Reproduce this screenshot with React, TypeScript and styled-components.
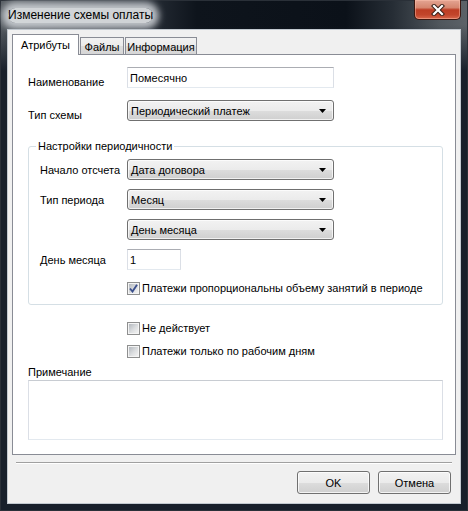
import React from "react";
import styled, { createGlobalStyle } from "styled-components";

const Global = createGlobalStyle`
  html, body { margin: 0; padding: 0; background: #18202b; }
  body { font-family: "Liberation Sans", Arial, sans-serif; font-size: 11px; color: #000; }
  * { box-sizing: border-box; }
`;

const Window = styled.div`
  width: 468px;
  height: 511px;
  border: 1px solid #2a3038;
  display: flex;
  flex-direction: column;
  background:
    linear-gradient(to bottom, rgba(24, 32, 43, 0) 0px, rgba(24, 32, 43, 0) 24px, #18202b 70px),
    linear-gradient(to right, #585e64 0%, #4c5258 3%, #2a313a 30%, #0e141c 42%, #0b1119 74%, #262d35 84%, #4f565c 94%, #5c6268 100%);
`;

const TitleBar = styled.div`
  height: 28px;
  display: flex;
  align-items: flex-start;
  justify-content: space-between;
`;

const Title = styled.div`
  margin: 7px 0 0 7px;
  font-size: 12px;
  line-height: 15px;
  color: #000;
  border-radius: 8px;
  background: rgba(225, 228, 231, 0.9);
  box-shadow: 0 0 7px 6px rgba(215, 219, 223, 0.85);
`;

const CloseButton = styled.div`
  width: 47px;
  height: 20px;
  margin: -1px 6px 0 0;
  border: 1px solid #3c1710;
  border-top: none;
  border-radius: 0 0 5px 5px;
  display: flex;
  align-items: center;
  justify-content: center;
  background: linear-gradient(to bottom, #e4a593 0%, #d5866f 40%, #bd3d24 52%, #c2452b 78%, #d8674c 100%);
  box-shadow: inset 0 0 0 1px rgba(255, 200, 180, 0.45);
`;

const Client = styled.div`
  flex: 1;
  margin: 0 6px 6px;
  border: 1px solid #c2c9d0;
  background: #f0f0f0;
  display: flex;
  flex-direction: column;
`;

const TabStrip = styled.div`
  height: 24px;
  padding-left: 4px;
  display: flex;
  align-items: flex-end;
`;

const Tab = styled.div<{ $active?: boolean; $w: number }>`
  width: ${(p) => p.$w}px;
  height: ${(p) => (p.$active ? 21 : 17)}px;
  margin-bottom: ${(p) => (p.$active ? -1 : 0)}px;
  position: relative;
  z-index: ${(p) => (p.$active ? 1 : 0)};
  border: 1px solid #898c95;
  border-bottom: none;
  margin-left: ${(p) => (p.$active ? 0 : 1)}px;
  display: flex;
  align-items: center;
  justify-content: center;
  padding-top: ${(p) => (p.$active ? 0 : 1)}px;
  background: ${(p) =>
    p.$active ? "#ffffff" : "linear-gradient(to bottom, #f2f2f2 0%, #ebebeb 50%, #dddddd 51%, #d6d6d6 100%)"};
`;

const Panel = styled.div`
  height: 401px;
  margin: 0 4px 0 4px;
  border: 1px solid #898c95;
  background: #fff;
  padding: 11px 12px 0 15px;
  display: flex;
  flex-direction: column;
`;

const Row = styled.div<{ $col: number; $top?: number }>`
  display: grid;
  grid-template-columns: ${(p) => p.$col}px auto;
  align-items: center;
  justify-content: start;
  margin-top: ${(p) => p.$top ?? 0}px;
`;

const Label = styled.span<{ $drop?: number }>`
  line-height: 13px;
  margin-top: ${(p) => p.$drop ?? 0}px;
  white-space: nowrap;
`;

const TextBox = styled.div<{ $w: number }>`
  width: ${(p) => p.$w}px;
  height: 21px;
  border: 1px solid #dbdfe6;
  border-top-color: #abadb3;
  border-bottom-color: #e3e9ef;
  background: #fff;
  padding-left: 2px;
  display: flex;
  align-items: center;
`;

const ComboBox = styled.div`
  width: 207px;
  height: 21px;
  border: 1px solid #707070;
  border-radius: 3px;
  padding: 0 7px 0 3px;
  display: flex;
  align-items: center;
  justify-content: space-between;
  background: linear-gradient(to bottom, #f2f2f2 0%, #ebebeb 50%, #dddddd 51%, #cfcfcf 100%);
  box-shadow: inset 0 0 0 1px rgba(255, 255, 255, 0.7);
`;

const GroupBox = styled.fieldset`
  margin: 18px 0 0 0;
  min-width: 0;
  border: 1px solid #d5dfe5;
  border-radius: 3px;
  padding: 6px 11px 9px 11px;
  display: flex;
  flex-direction: column;
`;

const GroupTitle = styled.legend`
  margin-left: -4px;
  padding: 0 2px;
  line-height: 13px;
  font-size: 11px;
`;

const CheckRow = styled.label<{ $indent: number; $top: number }>`
  display: flex;
  align-items: center;
  gap: 2px;
  padding-left: ${(p) => p.$indent}px;
  margin-top: ${(p) => p.$top}px;
  line-height: 13px;
  white-space: nowrap;
`;

const CheckBox = styled.span`
  width: 13px;
  height: 13px;
  flex: none;
  border: 1px solid #8e8f8f;
  padding: 1px;
  display: flex;
  align-items: center;
  justify-content: center;
  background: linear-gradient(135deg, #b4b9bf 0%, #dcdee0 55%, #f2f2f2 100%) content-box, #f4f4f4;
`;

const NoteLabel = styled.div`
  margin-top: 8px;
  line-height: 13px;
`;

const NoteArea = styled.div`
  margin-top: 1px;
  height: 60px;
  border: 1px solid #dbdfe6;
  border-top-color: #c8ccd2;
  border-bottom-color: #e3e9ef;
  background: #fff;
`;

const Separator = styled.div`
  margin: 7px 8px 0;
  height: 2px;
  border-top: 1px solid #a0a0a0;
  border-bottom: 1px solid #ffffff;
`;

const ButtonRow = styled.div`
  margin-top: 7px;
  padding-right: 9px;
  display: flex;
  justify-content: flex-end;
  gap: 8px;
`;

const Button = styled.div`
  width: 73px;
  height: 23px;
  border: 1px solid #707070;
  border-radius: 3px;
  display: flex;
  align-items: center;
  justify-content: center;
  background: linear-gradient(to bottom, #f2f2f2 0%, #ebebeb 50%, #dddddd 51%, #cfcfcf 100%);
  box-shadow: inset 0 0 0 1px rgba(255, 255, 255, 0.75);
`;

const Arrow = () => (
  <svg width="7" height="4" viewBox="0 0 7 4">
    <polygon points="0,0 7,0 3.5,4" fill="#000" />
  </svg>
);

const Combo = ({ value }: { value: string }) => (
  <ComboBox>
    <span>{value}</span>
    <Arrow />
  </ComboBox>
);

const Check = ({ checked, text, indent, top }: { checked?: boolean; text: string; indent: number; top: number }) => (
  <CheckRow $indent={indent} $top={top}>
    <CheckBox>
      {checked && (
        <svg width="9" height="9" viewBox="0 0 9 9">
          <path d="M1 4.5 L3.5 7.5 L8 0.8" fill="none" stroke="#3b4f8c" strokeWidth="1.9" />
        </svg>
      )}
    </CheckBox>
    <span>{text}</span>
  </CheckRow>
);

export default function App() {
  return (
    <>
      <Global />
      <Window>
        <TitleBar>
          <Title>Изменение схемы оплаты</Title>
          <CloseButton>
            <svg width="14" height="12" viewBox="0 0 14 12">
              <path d="M3 2 L11 10 M11 2 L3 10" stroke="#3a2018" strokeWidth="4.2" strokeLinecap="square" />
              <path d="M3 2 L11 10 M11 2 L3 10" stroke="#ffffff" strokeWidth="2.2" strokeLinecap="square" />
            </svg>
          </CloseButton>
        </TitleBar>
        <Client>
          <TabStrip>
            <Tab $active $w={67}>Атрибуты</Tab>
            <Tab $w={44}>Файлы</Tab>
            <Tab $w={72}>Информация</Tab>
          </TabStrip>
          <Panel>
            <Row $col={99}>
              <Label $drop={10}>Наименование</Label>
              <TextBox $w={207}>Помесячно</TextBox>
            </Row>
            <Row $col={99} $top={10}>
              <Label $drop={10}>Тип схемы</Label>
              <Combo value="Периодический платеж" />
            </Row>
            <GroupBox>
              <GroupTitle>Настройки периодичности</GroupTitle>
              <Row $col={87}>
                <Label $drop={2}>Начало отсчета</Label>
                <Combo value="Дата договора" />
              </Row>
              <Row $col={87} $top={9}>
                <Label $drop={2}>Тип периода</Label>
                <Combo value="Месяц" />
              </Row>
              <Row $col={87} $top={9}>
                <span />
                <Combo value="День месяца" />
              </Row>
              <Row $col={87} $top={9}>
                <Label $drop={2}>День месяца</Label>
                <TextBox $w={54}>1</TextBox>
              </Row>
              <Check checked indent={87} top={12} text="Платежи пропорциональны объему занятий в периоде" />
            </GroupBox>
            <Check indent={99} top={17} text="Не действует" />
            <Check indent={99} top={10} text="Платежи только по рабочим дням" />
            <NoteLabel>Примечание</NoteLabel>
            <NoteArea />
          </Panel>
          <Separator />
          <ButtonRow>
            <Button>OK</Button>
            <Button>Отмена</Button>
          </ButtonRow>
        </Client>
      </Window>
    </>
  );
}
